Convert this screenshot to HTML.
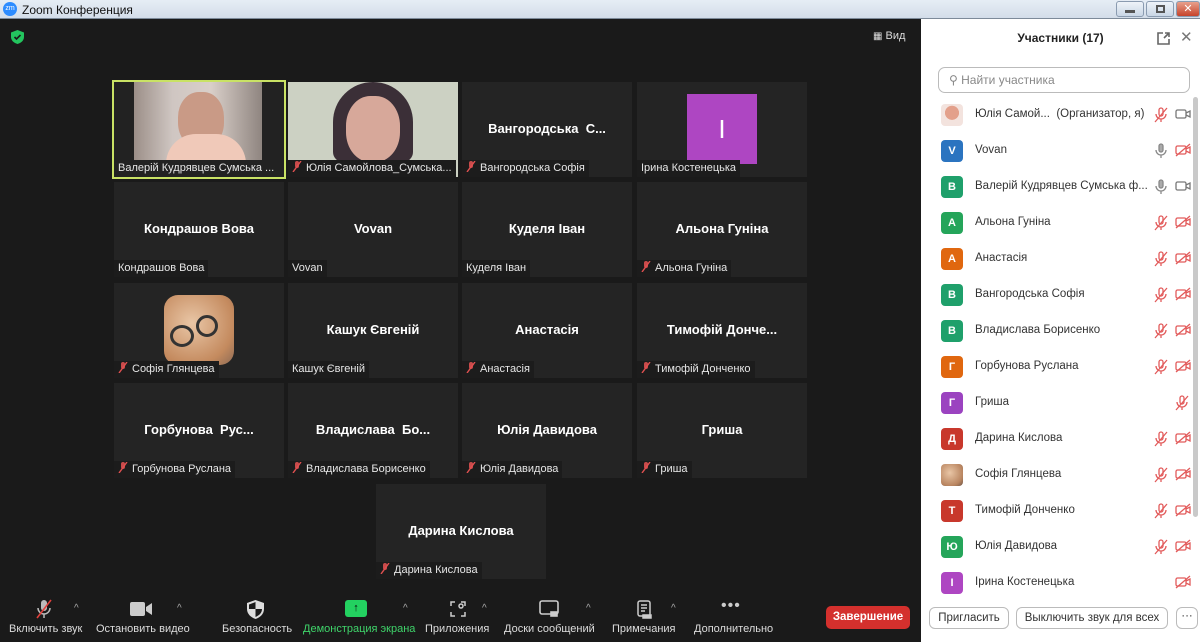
<!DOCTYPE html>
<html><head><meta charset="utf-8"><style>
*{margin:0;padding:0;box-sizing:border-box}
body{width:1200px;height:642px;overflow:hidden;background:#1a1a1a;font-family:"Liberation Sans","DejaVu Sans",sans-serif;position:relative}
.title{position:absolute;left:0;top:0;width:1200px;height:19px;background:linear-gradient(#e6edf5,#d3dde9);border-bottom:1px solid #7d8a99;font-size:12px;color:#111}
.title .zm{position:absolute;left:3px;top:2px;width:14px;height:14px;border-radius:50%;background:#2d8cff;color:#fff;font-size:7px;text-align:center;line-height:14px}
.title .t{position:absolute;left:22px;top:3px}
.wb{position:absolute;top:1px;height:16px;border:1px solid #8a9bb0;border-radius:3px;background:linear-gradient(#eef3f9,#c9d6e5)}
.tile{position:absolute;width:170px;height:95px;background:#242424}
.nm{position:absolute;left:0;bottom:0;height:17px;padding:0 4px;background:#1c1c1c;color:#e6e6e6;font-size:11px;line-height:17px;white-space:nowrap;max-width:170px;overflow:hidden}
.big{position:absolute;left:0;right:0;top:39px;text-align:center;color:#fff;font-weight:bold;font-size:13px;white-space:nowrap}
.mi{display:inline-block;width:10px;height:11px;vertical-align:-1px;margin-right:4px}
.panel{position:absolute;left:921px;top:19px;width:279px;height:623px;background:#fff}
.row{position:absolute;left:20px;height:24px;width:240px}
.av{position:absolute;left:0;top:1px;width:22px;height:22px;border-radius:4px;color:#fff;font-size:11px;font-weight:bold;text-align:center;line-height:22px}
.pn{position:absolute;left:34px;top:5px;font-size:11.5px;color:#333;white-space:nowrap}
.ic{position:absolute;top:4px}
.tb{position:absolute;top:0;text-align:center;color:#ddd;font-size:11px;white-space:nowrap}
.btn{position:absolute;top:607px;height:22px;border:1px solid #bbb;border-radius:6px;font-size:11.5px;color:#333;text-align:center;line-height:20px;background:#fff}
.car{position:absolute;top:603px;color:#aaa;font-size:10px}
</style></head><body>
<div class="title"><div class="zm">zm</div><div class="t">Zoom Конференция</div>
<div class="wb" style="left:1116px;width:28px"><div style="position:absolute;left:8px;top:8px;width:10px;height:3px;background:#555"></div></div>
<div class="wb" style="left:1146px;width:28px"><div style="position:absolute;left:9px;top:3px;width:9px;height:8px;border:2px solid #555"></div></div>
<div class="wb" style="left:1176px;width:24px;background:linear-gradient(#e8a08c,#c6432b);color:#fff;font-size:11px;font-weight:bold;text-align:center;line-height:14px">✕</div>
</div>
<svg style="position:absolute;left:11px;top:30px" width="13" height="14" viewBox="0 0 13 14"><path d="M6.5 0L13 2.5V7c0 3.5-3 6-6.5 7C3 13 0 10.5 0 7V2.5z" fill="#23c55e"/><path d="M3.5 7l2 2 4-4" stroke="#1a1a1a" stroke-width="1.6" fill="none"/></svg>
<div style="position:absolute;left:873px;top:30px;color:#ddd;font-size:11px"><span style="font-size:10px">▦</span> Вид</div>

<!-- row 1 -->
<div class="tile" style="left:112px;top:80px;width:174px;height:99px;border:2px solid #c9e265;background:#222">
 <div style="position:absolute;left:20px;top:0;width:128px;height:95px;background:linear-gradient(90deg,#9c8f88,#cfc6c2 30%,#d9cfc9 60%,#8f8580)"></div>
 <div style="position:absolute;left:64px;top:10px;width:46px;height:56px;border-radius:45%;background:#c99a86"></div>
 <div style="position:absolute;left:52px;top:52px;width:80px;height:43px;border-radius:30px 30px 0 0;background:#f0c9b9"></div>
 <div class="nm" style="background:#222">Валерій Кудрявцев Сумська ...</div></div>
<div class="tile" style="left:288px;top:82px">
 <div style="position:absolute;left:0;top:0;width:170px;height:95px;background:#ccd1c3"></div>
 <div style="position:absolute;left:45px;top:0;width:80px;height:80px;border-radius:40px 40px 10px 10px;background:#3b2f37"></div>
 <div style="position:absolute;left:58px;top:14px;width:54px;height:66px;border-radius:45%;background:#d7a89a"></div>
 <div class="nm"><svg class="mi" viewBox="0 0 10 11"><rect x="3" y="0" width="4" height="7" rx="2" fill="#c84b4b"/><path d="M1 11L9 0" stroke="#e05050" stroke-width="1.4"/></svg>Юлія Самойлова_Сумська...</div></div>
<div class="tile" style="left:462px;top:82px"><div class="big">Вангородська&nbsp; С...</div>
 <div class="nm"><svg class="mi" viewBox="0 0 10 11"><rect x="3" y="0" width="4" height="7" rx="2" fill="#c84b4b"/><path d="M1 11L9 0" stroke="#e05050" stroke-width="1.4"/></svg>Вангородська Софія</div></div>
<div class="tile" style="left:637px;top:82px"><div style="position:absolute;left:50px;top:12px;width:70px;height:70px;background:#ae46c2;color:#fff;font-size:26px;text-align:center;line-height:70px">I</div>
 <div class="nm">Ірина Костенецька</div></div>
<!-- row 2 -->
<div class="tile" style="left:114px;top:182px"><div class="big">Кондрашов Вова</div><div class="nm">Кондрашов Вова</div></div>
<div class="tile" style="left:288px;top:182px"><div class="big">Vovan</div><div class="nm">Vovan</div></div>
<div class="tile" style="left:462px;top:182px"><div class="big">Куделя Іван</div><div class="nm">Куделя Іван</div></div>
<div class="tile" style="left:637px;top:182px"><div class="big">Альона Гуніна</div><div class="nm"><svg class="mi" viewBox="0 0 10 11"><rect x="3" y="0" width="4" height="7" rx="2" fill="#c84b4b"/><path d="M1 11L9 0" stroke="#e05050" stroke-width="1.4"/></svg>Альона Гуніна</div></div>
<!-- row 3 -->
<div class="tile" style="left:114px;top:283px"><div style="position:absolute;left:50px;top:12px;width:70px;height:70px;border-radius:14px;background:radial-gradient(circle at 40% 40%,#e9c6a6,#c48a5e 70%,#8d6a55)"></div>
 <div style="position:absolute;left:56px;top:42px;width:24px;height:22px;border:3px solid #333;border-radius:50%"></div><div style="position:absolute;left:82px;top:32px;width:22px;height:22px;border:3px solid #333;border-radius:50%"></div>
 <div class="nm"><svg class="mi" viewBox="0 0 10 11"><rect x="3" y="0" width="4" height="7" rx="2" fill="#c84b4b"/><path d="M1 11L9 0" stroke="#e05050" stroke-width="1.4"/></svg>Софія Глянцева</div></div>
<div class="tile" style="left:288px;top:283px"><div class="big">Кашук Євгеній</div><div class="nm">Кашук Євгеній</div></div>
<div class="tile" style="left:462px;top:283px"><div class="big">Анастасія</div><div class="nm"><svg class="mi" viewBox="0 0 10 11"><rect x="3" y="0" width="4" height="7" rx="2" fill="#c84b4b"/><path d="M1 11L9 0" stroke="#e05050" stroke-width="1.4"/></svg>Анастасія</div></div>
<div class="tile" style="left:637px;top:283px"><div class="big">Тимофій Донче...</div><div class="nm"><svg class="mi" viewBox="0 0 10 11"><rect x="3" y="0" width="4" height="7" rx="2" fill="#c84b4b"/><path d="M1 11L9 0" stroke="#e05050" stroke-width="1.4"/></svg>Тимофій Донченко</div></div>
<!-- row 4 -->
<div class="tile" style="left:114px;top:383px"><div class="big">Горбунова&nbsp; Рус...</div><div class="nm"><svg class="mi" viewBox="0 0 10 11"><rect x="3" y="0" width="4" height="7" rx="2" fill="#c84b4b"/><path d="M1 11L9 0" stroke="#e05050" stroke-width="1.4"/></svg>Горбунова Руслана</div></div>
<div class="tile" style="left:288px;top:383px"><div class="big">Владислава&nbsp; Бо...</div><div class="nm"><svg class="mi" viewBox="0 0 10 11"><rect x="3" y="0" width="4" height="7" rx="2" fill="#c84b4b"/><path d="M1 11L9 0" stroke="#e05050" stroke-width="1.4"/></svg>Владислава Борисенко</div></div>
<div class="tile" style="left:462px;top:383px"><div class="big">Юлія Давидова</div><div class="nm"><svg class="mi" viewBox="0 0 10 11"><rect x="3" y="0" width="4" height="7" rx="2" fill="#c84b4b"/><path d="M1 11L9 0" stroke="#e05050" stroke-width="1.4"/></svg>Юлія Давидова</div></div>
<div class="tile" style="left:637px;top:383px"><div class="big">Гриша</div><div class="nm"><svg class="mi" viewBox="0 0 10 11"><rect x="3" y="0" width="4" height="7" rx="2" fill="#c84b4b"/><path d="M1 11L9 0" stroke="#e05050" stroke-width="1.4"/></svg>Гриша</div></div>
<div class="tile" style="left:376px;top:484px"><div class="big">Дарина Кислова</div><div class="nm"><svg class="mi" viewBox="0 0 10 11"><rect x="3" y="0" width="4" height="7" rx="2" fill="#c84b4b"/><path d="M1 11L9 0" stroke="#e05050" stroke-width="1.4"/></svg>Дарина Кислова</div></div>

<!-- toolbar -->
<div style="position:absolute;left:0;top:590px;width:920px;height:52px">
 <svg style="position:absolute;left:35px;top:9px" width="18" height="20" viewBox="0 0 18 20"><rect x="6" y="1" width="6" height="11" rx="3" fill="#bbb"/><path d="M3 9a6 6 0 0 0 12 0M9 15v4" stroke="#bbb" stroke-width="1.5" fill="none"/><path d="M2 19L16 1" stroke="#e0403c" stroke-width="1.6"/></svg>
 <div class="tb" style="left:9px;top:33px">Включить звук</div>
 <svg style="position:absolute;left:130px;top:12px" width="22" height="14" viewBox="0 0 22 14"><rect x="0" y="0" width="15" height="14" rx="2" fill="#ccc"/><path d="M16 5l6-4v12l-6-4z" fill="#ccc"/></svg>
 <div class="tb" style="left:96px;top:33px">Остановить видео</div>
 <svg style="position:absolute;left:247px;top:10px" width="17" height="19" viewBox="0 0 17 19"><path d="M8.5 0L17 3v6c0 5-4 8.5-8.5 10C4 17.5 0 14 0 9V3z" fill="#ddd"/><path d="M8.5 2L2 4.5V9h6.5zM8.5 9v8c3.5-1.5 6.5-4 6.5-8z" fill="#1a1a1a"/></svg>
 <div class="tb" style="left:222px;top:33px">Безопасность</div>
 <div style="position:absolute;left:345px;top:10px;width:22px;height:17px;background:#23d160;border-radius:3px;color:#0a0a0a;font-size:11px;text-align:center;line-height:17px;font-weight:bold">↑</div>
 <div class="tb" style="left:303px;top:33px;color:#3fd46a">Демонстрация экрана</div>
 <svg style="position:absolute;left:450px;top:11px" width="16" height="16" viewBox="0 0 16 16" fill="none" stroke="#ccc" stroke-width="1.5"><path d="M1 5V1h4M15 11v4h-4M1 11v4h4M11 1h4v4"/><circle cx="11" cy="5" r="2"/></svg>
 <div class="tb" style="left:425px;top:33px">Приложения</div>
 <svg style="position:absolute;left:539px;top:10px" width="20" height="18" viewBox="0 0 20 18" fill="none" stroke="#ccc" stroke-width="1.6"><rect x="1" y="1" width="18" height="13" rx="2"/><rect x="12" y="12" width="6" height="4" fill="#ccc"/></svg>
 <div class="tb" style="left:504px;top:33px">Доски сообщений</div>
 <svg style="position:absolute;left:637px;top:10px" width="15" height="19" viewBox="0 0 15 19" fill="none" stroke="#ccc" stroke-width="1.5"><rect x="1" y="1" width="12" height="15" rx="2"/><path d="M4 5h6M4 8h6M4 11h4"/><rect x="6" y="15" width="8" height="3" fill="#ccc"/></svg>
 <div class="tb" style="left:612px;top:33px">Примечания</div>
 <div class="tb" style="left:721px;top:7px;font-size:16px;letter-spacing:1px;color:#ccc">•••</div>
 <div class="tb" style="left:694px;top:33px">Дополнительно</div>
 <div class="car" style="left:74px;top:13px">^</div><div class="car" style="left:177px;top:13px">^</div><div class="car" style="left:403px;top:13px">^</div><div class="car" style="left:482px;top:13px">^</div><div class="car" style="left:586px;top:13px">^</div><div class="car" style="left:671px;top:13px">^</div>
 <div style="position:absolute;left:826px;top:16px;width:84px;height:23px;background:#d4302d;border-radius:5px;color:#fff;font-weight:bold;font-size:11.5px;text-align:center;line-height:23px">Завершение</div>
</div>

<!-- panel -->
<div class="panel">
 <div style="position:absolute;left:0;top:12px;width:279px;text-align:center;font-weight:bold;font-size:12px;color:#222">Участники (17)</div>
 <svg style="position:absolute;left:236px;top:13px" width="13" height="13" viewBox="0 0 13 13" fill="none" stroke="#666" stroke-width="1.6"><path d="M6 1H1v11h11V7M7 6l5-5M8 1h4v4"/></svg>
 <div style="position:absolute;left:259px;top:9px;color:#777;font-size:15px">✕</div>
 <div style="position:absolute;left:17px;top:48px;width:252px;height:26px;border:1px solid #bbb;border-radius:7px;font-size:12px;color:#888;line-height:24px;padding-left:10px">⚲ Найти участника</div>
 <div style="position:absolute;left:272px;top:78px;width:5px;height:420px;background:#c9c9c9;border-radius:3px"></div>

 <div class="row" style="top:84px"><div class="av" style="background:radial-gradient(circle at 50% 40%,#e3a08b 40%,#f3e3de 42%)"></div><div class="pn">Юлія Самой...&nbsp;&nbsp;(Организатор, я)</div><svg class="ic" style="left:213px" width="14" height="16" viewBox="0 0 14 16" fill="none" stroke="#e25b5b" stroke-width="1.3"><rect x="5" y="1" width="4" height="8" rx="2"/><path d="M2 7a5 5 0 0 0 10 0M7 12v3M1 15L13 1"/></svg><svg class="ic" style="left:234px" width="16" height="14" viewBox="0 0 16 14" fill="none" stroke="#777" stroke-width="1.3"><rect x="1" y="3" width="10" height="8" rx="1.5"/><path d="M11 6l4-2v6l-4-2"/></svg></div>

 <div class="row" style="top:120px"><div class="av" style="background:#2b74c0">V</div><div class="pn">Vovan</div><svg class="ic" style="left:213px" width="14" height="16" viewBox="0 0 14 16" fill="none" stroke="#888" stroke-width="1.3"><rect x="5" y="1" width="4" height="8" rx="2" fill="#aaa"/><path d="M2 7a5 5 0 0 0 10 0M7 12v3"/></svg><svg class="ic" style="left:234px" width="16" height="14" viewBox="0 0 16 14" fill="none" stroke="#e25b5b" stroke-width="1.3"><rect x="1" y="3" width="10" height="8" rx="1.5"/><path d="M11 6l4-2v6l-4-2M1 13L15 1"/></svg></div>

 <div class="row" style="top:156px"><div class="av" style="background:#1fa06b">В</div><div class="pn">Валерій Кудрявцев Сумська ф...</div><svg class="ic" style="left:213px" width="14" height="16" viewBox="0 0 14 16" fill="none" stroke="#888" stroke-width="1.3"><rect x="5" y="1" width="4" height="8" rx="2" fill="#aaa"/><path d="M2 7a5 5 0 0 0 10 0M7 12v3"/></svg><svg class="ic" style="left:234px" width="16" height="14" viewBox="0 0 16 14" fill="none" stroke="#777" stroke-width="1.3"><rect x="1" y="3" width="10" height="8" rx="1.5"/><path d="M11 6l4-2v6l-4-2"/></svg></div>

 <div class="row" style="top:192px"><div class="av" style="background:#25a55a">А</div><div class="pn">Альона Гуніна</div><svg class="ic" style="left:213px" width="14" height="16" viewBox="0 0 14 16" fill="none" stroke="#e25b5b" stroke-width="1.3"><rect x="5" y="1" width="4" height="8" rx="2"/><path d="M2 7a5 5 0 0 0 10 0M7 12v3M1 15L13 1"/></svg><svg class="ic" style="left:234px" width="16" height="14" viewBox="0 0 16 14" fill="none" stroke="#e25b5b" stroke-width="1.3"><rect x="1" y="3" width="10" height="8" rx="1.5"/><path d="M11 6l4-2v6l-4-2M1 13L15 1"/></svg></div>

 <div class="row" style="top:228px"><div class="av" style="background:#e0670f">А</div><div class="pn">Анастасія</div><svg class="ic" style="left:213px" width="14" height="16" viewBox="0 0 14 16" fill="none" stroke="#e25b5b" stroke-width="1.3"><rect x="5" y="1" width="4" height="8" rx="2"/><path d="M2 7a5 5 0 0 0 10 0M7 12v3M1 15L13 1"/></svg><svg class="ic" style="left:234px" width="16" height="14" viewBox="0 0 16 14" fill="none" stroke="#e25b5b" stroke-width="1.3"><rect x="1" y="3" width="10" height="8" rx="1.5"/><path d="M11 6l4-2v6l-4-2M1 13L15 1"/></svg></div>

 <div class="row" style="top:264px"><div class="av" style="background:#1fa06b">В</div><div class="pn">Вангородська Софія</div><svg class="ic" style="left:213px" width="14" height="16" viewBox="0 0 14 16" fill="none" stroke="#e25b5b" stroke-width="1.3"><rect x="5" y="1" width="4" height="8" rx="2"/><path d="M2 7a5 5 0 0 0 10 0M7 12v3M1 15L13 1"/></svg><svg class="ic" style="left:234px" width="16" height="14" viewBox="0 0 16 14" fill="none" stroke="#e25b5b" stroke-width="1.3"><rect x="1" y="3" width="10" height="8" rx="1.5"/><path d="M11 6l4-2v6l-4-2M1 13L15 1"/></svg></div>

 <div class="row" style="top:300px"><div class="av" style="background:#1fa06b">В</div><div class="pn">Владислава Борисенко</div><svg class="ic" style="left:213px" width="14" height="16" viewBox="0 0 14 16" fill="none" stroke="#e25b5b" stroke-width="1.3"><rect x="5" y="1" width="4" height="8" rx="2"/><path d="M2 7a5 5 0 0 0 10 0M7 12v3M1 15L13 1"/></svg><svg class="ic" style="left:234px" width="16" height="14" viewBox="0 0 16 14" fill="none" stroke="#e25b5b" stroke-width="1.3"><rect x="1" y="3" width="10" height="8" rx="1.5"/><path d="M11 6l4-2v6l-4-2M1 13L15 1"/></svg></div>

 <div class="row" style="top:336px"><div class="av" style="background:#e0670f">Г</div><div class="pn">Горбунова Руслана</div><svg class="ic" style="left:213px" width="14" height="16" viewBox="0 0 14 16" fill="none" stroke="#e25b5b" stroke-width="1.3"><rect x="5" y="1" width="4" height="8" rx="2"/><path d="M2 7a5 5 0 0 0 10 0M7 12v3M1 15L13 1"/></svg><svg class="ic" style="left:234px" width="16" height="14" viewBox="0 0 16 14" fill="none" stroke="#e25b5b" stroke-width="1.3"><rect x="1" y="3" width="10" height="8" rx="1.5"/><path d="M11 6l4-2v6l-4-2M1 13L15 1"/></svg></div>

 <div class="row" style="top:372px"><div class="av" style="background:#9b43c0">Г</div><div class="pn">Гриша</div><svg class="ic" style="left:234px" width="14" height="16" viewBox="0 0 14 16" fill="none" stroke="#e25b5b" stroke-width="1.3"><rect x="5" y="1" width="4" height="8" rx="2"/><path d="M2 7a5 5 0 0 0 10 0M7 12v3M1 15L13 1"/></svg></div>

 <div class="row" style="top:408px"><div class="av" style="background:#c8382c">Д</div><div class="pn">Дарина Кислова</div><svg class="ic" style="left:213px" width="14" height="16" viewBox="0 0 14 16" fill="none" stroke="#e25b5b" stroke-width="1.3"><rect x="5" y="1" width="4" height="8" rx="2"/><path d="M2 7a5 5 0 0 0 10 0M7 12v3M1 15L13 1"/></svg><svg class="ic" style="left:234px" width="16" height="14" viewBox="0 0 16 14" fill="none" stroke="#e25b5b" stroke-width="1.3"><rect x="1" y="3" width="10" height="8" rx="1.5"/><path d="M11 6l4-2v6l-4-2M1 13L15 1"/></svg></div>

 <div class="row" style="top:444px"><div class="av" style="background:radial-gradient(circle at 40% 40%,#e9c6a6,#b98560 70%,#6d5548)"></div><div class="pn">Софія Глянцева</div><svg class="ic" style="left:213px" width="14" height="16" viewBox="0 0 14 16" fill="none" stroke="#e25b5b" stroke-width="1.3"><rect x="5" y="1" width="4" height="8" rx="2"/><path d="M2 7a5 5 0 0 0 10 0M7 12v3M1 15L13 1"/></svg><svg class="ic" style="left:234px" width="16" height="14" viewBox="0 0 16 14" fill="none" stroke="#e25b5b" stroke-width="1.3"><rect x="1" y="3" width="10" height="8" rx="1.5"/><path d="M11 6l4-2v6l-4-2M1 13L15 1"/></svg></div>

 <div class="row" style="top:480px"><div class="av" style="background:#c8382c">Т</div><div class="pn">Тимофій Донченко</div><svg class="ic" style="left:213px" width="14" height="16" viewBox="0 0 14 16" fill="none" stroke="#e25b5b" stroke-width="1.3"><rect x="5" y="1" width="4" height="8" rx="2"/><path d="M2 7a5 5 0 0 0 10 0M7 12v3M1 15L13 1"/></svg><svg class="ic" style="left:234px" width="16" height="14" viewBox="0 0 16 14" fill="none" stroke="#e25b5b" stroke-width="1.3"><rect x="1" y="3" width="10" height="8" rx="1.5"/><path d="M11 6l4-2v6l-4-2M1 13L15 1"/></svg></div>

 <div class="row" style="top:516px"><div class="av" style="background:#25a55a">Ю</div><div class="pn">Юлія Давидова</div><svg class="ic" style="left:213px" width="14" height="16" viewBox="0 0 14 16" fill="none" stroke="#e25b5b" stroke-width="1.3"><rect x="5" y="1" width="4" height="8" rx="2"/><path d="M2 7a5 5 0 0 0 10 0M7 12v3M1 15L13 1"/></svg><svg class="ic" style="left:234px" width="16" height="14" viewBox="0 0 16 14" fill="none" stroke="#e25b5b" stroke-width="1.3"><rect x="1" y="3" width="10" height="8" rx="1.5"/><path d="M11 6l4-2v6l-4-2M1 13L15 1"/></svg></div>

 <div class="row" style="top:552px"><div class="av" style="background:#ae46c2">I</div><div class="pn">Ірина Костенецька</div><svg class="ic" style="left:234px" width="16" height="14" viewBox="0 0 16 14" fill="none" stroke="#e25b5b" stroke-width="1.3"><rect x="1" y="3" width="10" height="8" rx="1.5"/><path d="M11 6l4-2v6l-4-2M1 13L15 1"/></svg></div>
</div>
<div class="btn" style="left:929px;width:80px">Пригласить</div>
<div class="btn" style="left:1016px;width:152px">Выключить звук для всех</div>
<div class="btn" style="left:1176px;width:22px;line-height:16px">···</div>
</body></html>
